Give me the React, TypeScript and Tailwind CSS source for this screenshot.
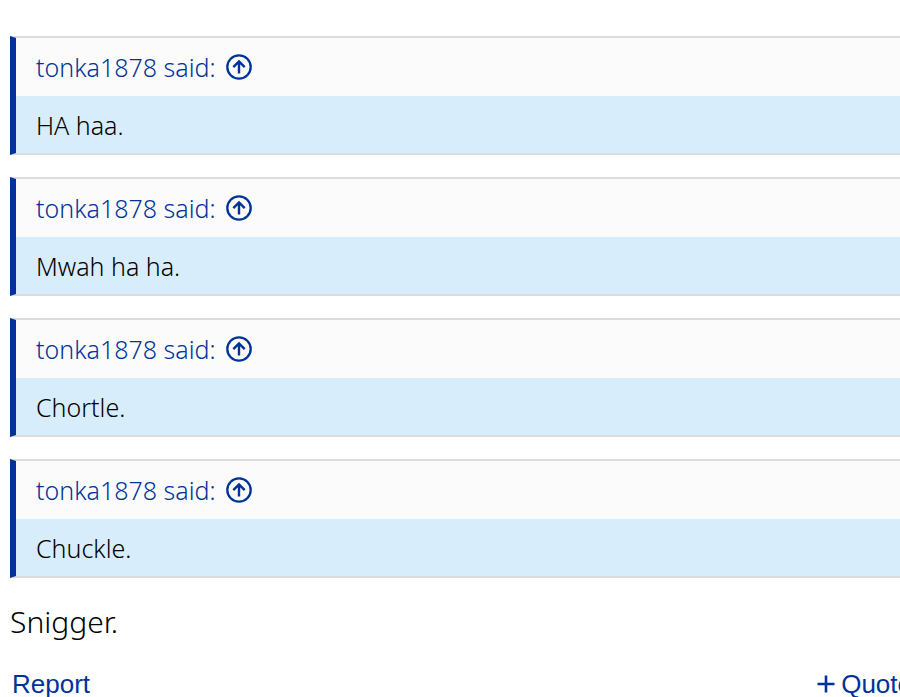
const quotes = [
  { id: 1, author: 'tonka1878', text: 'HA haa.' },
  { id: 2, author: 'tonka1878', text: 'Mwah ha ha.' },
  { id: 3, author: 'tonka1878', text: 'Chortle.' },
  { id: 4, author: 'tonka1878', text: 'Chuckle.' },
]

function ArrowUpIcon() {
  return (
    <svg viewBox="0 0 26 26" className="w-[26px] h-[26px]" fill="none" stroke="currentColor" aria-hidden="true">
      <circle cx="13" cy="13" r="11.7" strokeWidth="2.3" />
      <path d="M13 19.5V8M7.3 13.2L13 7.5L18.7 13.2" strokeWidth="2.4" />
    </svg>
  )
}

function PlusIcon() {
  return (
    <svg viewBox="0 0 18 18" className="w-[18px] h-[18px]" fill="none" stroke="currentColor" aria-hidden="true">
      <path d="M9 0.5V17.5M0.5 9H17.5" strokeWidth="2.6" />
    </svg>
  )
}

function Quote({ author, text }: { author: string; text: string }) {
  return (
    <blockquote className="border-y-2 border-l-[6px] border-y-[#dcdcdc] border-l-[#003399]">
      <div className="bg-[#fbfbfb] py-[11px] pl-5 leading-9 text-[#003399]">
        <a href="#post" className="flex items-center gap-[10px]">
          <span>{author} said:</span>
          <ArrowUpIcon />
        </a>
      </div>
      <div className="bg-[#d7edfc] pt-[11px] pb-[10px] pl-5 leading-9">{text}</div>
    </blockquote>
  )
}

export default function App() {
  return (
    <main className="overflow-hidden bg-white pt-9 pl-[10px] font-['Noto_Sans',sans-serif] text-[25px] font-[360] text-black">
      <div className="flex flex-col gap-[22px]">
        {quotes.map((quote) => (
          <Quote key={quote.id} author={quote.author} text={quote.text} />
        ))}
      </div>
      <p className="mt-6 text-[30px] leading-10">Snigger.</p>
      <div className="mt-[26px] flex justify-between pl-[2px] font-['Liberation_Sans',sans-serif] text-[26px] leading-8 font-normal text-[#003399]">
        <button type="button">Report</button>
        <button type="button" className="-mr-3 flex items-center gap-[6px]">
          <PlusIcon />
          <span>Quote</span>
        </button>
      </div>
    </main>
  )
}
